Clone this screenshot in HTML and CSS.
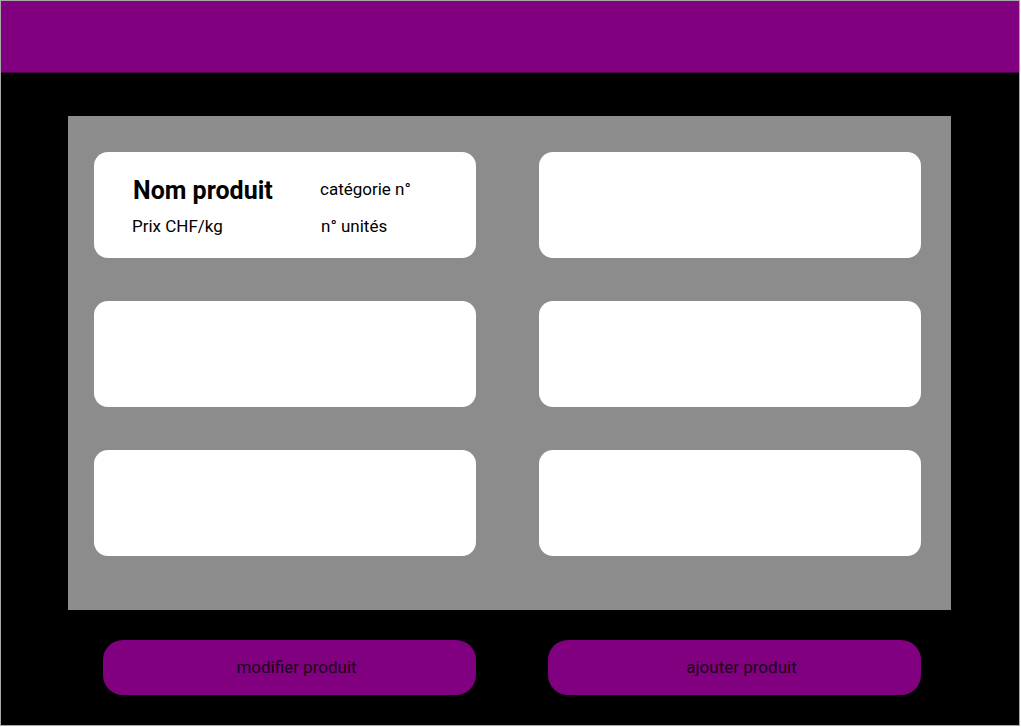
FILE: index.html
```html
<!DOCTYPE html>
<html lang="fr">
<head>
<meta charset="utf-8">
<title>Produits</title>
<link rel="stylesheet" href="styles.css">
</head>
<body>
<div class="frame">
  <header class="topbar"></header>
  <main class="content">
    <section class="panel">
      <div class="card">
        <div class="card-row">
          <span class="name">Nom produit</span>
          <span class="meta cat">catégorie n°</span>
        </div>
        <div class="card-row second">
          <span class="meta price">Prix CHF/kg</span>
          <span class="meta units">n° unités</span>
        </div>
      </div>
      <div class="card"></div>
      <div class="card"></div>
      <div class="card"></div>
      <div class="card"></div>
      <div class="card"></div>
    </section>
    <div class="actions">
      <button class="btn">modifier produit</button>
      <button class="btn">ajouter produit</button>
    </div>
  </main>
</div>
</body>
</html>
```

FILE: styles.css
```css
html, body {
  margin: 0;
  padding: 0;
  background: #ffffff;
}
body {
  font-family: Roboto, "Liberation Sans", sans-serif;
}
.frame {
  width: 1018px;
  height: 724px;
  border: 1px solid #a8a8a8;
  background: #000000;
  display: flex;
  flex-direction: column;
}
.topbar {
  height: 71px;
  background: #800080;
  border-bottom: 1px solid #4a004a;
  flex: none;
}
.content {
  flex: 1;
  padding: 43px 0 0 67px;
}
.panel {
  width: 883px;
  height: 494px;
  box-sizing: border-box;
  background: #8c8c8c;
  padding: 36px 0 0 26px;
  display: grid;
  grid-template-columns: 382px 382px;
  grid-template-rows: 106px 106px 106px;
  column-gap: 63px;
  row-gap: 43px;
  align-content: start;
}
.card {
  background: #ffffff;
  border-radius: 14px;
  box-sizing: border-box;
  padding: 26px 0 0 38px;
}
.card-row {
  display: flex;
  align-items: baseline;
}
.card-row.second {
  margin-top: 15px;
}
.name {
  font-size: 25px;
  line-height: 1;
  font-weight: 700;
  color: #000;
  width: 187px;
  margin-left: 1px;
}
.meta {
  font-size: 17px;
  line-height: 1;
  color: #000;
}
.price {
  width: 189px;
}
.cat {
  position: relative;
  top: -4px;
}
.actions {
  display: flex;
  gap: 72px;
  padding: 30px 0 0 35px;
}
.btn {
  width: 373px;
  height: 55px;
  border: none;
  border-radius: 20px;
  background: #800080;
  color: #1a001a;
  font-family: Roboto, "Liberation Sans", sans-serif;
  font-size: 17px;
  padding: 0 0 2px 14px;
}
```
